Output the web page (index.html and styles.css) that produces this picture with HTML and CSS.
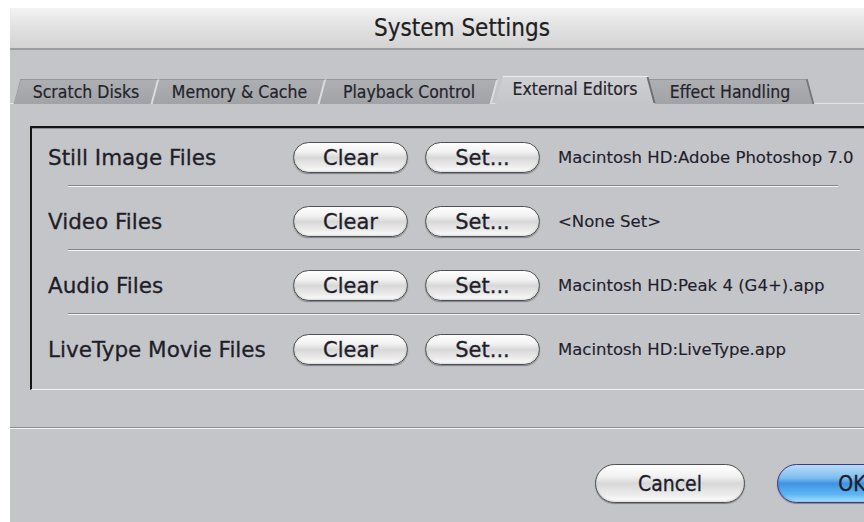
FILE: index.html
```html
<!DOCTYPE html>
<html>
<head>
<meta charset="utf-8">
<title>System Settings</title>
<link rel="stylesheet" href="styles.css">
</head>
<body>
<div class="window">
  <header class="titlebar">
    <h1 class="title">System Settings</h1>
  </header>
  <div class="content">
    <nav class="tabs">
      <div class="tab tab-before tab-first">Scratch Disks</div>
      <div class="tab tab-before">Memory &amp; Cache</div>
      <div class="tab tab-before">Playback Control</div>
      <div class="tab tab-active">External Editors</div>
      <div class="tab tab-after">Effect Handling</div>
    </nav>

    <section class="panel">
      <div class="row">
        <span class="label">Still Image Files</span>
        <button class="pill">Clear</button>
        <button class="pill">Set...</button>
        <span class="path">Macintosh HD:Adobe Photoshop 7.0</span>
      </div>
      <div class="rule rule-short"></div>
      <div class="row">
        <span class="label">Video Files</span>
        <button class="pill">Clear</button>
        <button class="pill">Set...</button>
        <span class="path">&lt;None Set&gt;</span>
      </div>
      <div class="rule"></div>
      <div class="row">
        <span class="label">Audio Files</span>
        <button class="pill">Clear</button>
        <button class="pill">Set...</button>
        <span class="path">Macintosh HD:Peak 4 (G4+).app</span>
      </div>
      <div class="rule"></div>
      <div class="row">
        <span class="label">LiveType Movie Files</span>
        <button class="pill">Clear</button>
        <button class="pill">Set...</button>
        <span class="path">Macintosh HD:LiveType.app</span>
      </div>
    </section>

    <div class="divider"></div>

    <footer class="actions">
      <button class="pill pill-large">Cancel</button>
      <button class="pill pill-large pill-default">OK</button>
    </footer>
  </div>
</div>
</body>
</html>
```

FILE: styles.css
```css
html, body {
  margin: 0;
  padding: 0;
  background: #ffffff;
  overflow: hidden;
}

body {
  width: 864px;
  height: 522px;
  font-family: "DejaVu Sans", "Liberation Sans", sans-serif;
  color: #1c1c24;
}

.window {
  margin: 8px 0 0 10px;
  width: 904px;
  height: 520px;
  background: #c4c5c9;
}

/* ---------- title bar ---------- */
.titlebar {
  height: 40px;
  background: linear-gradient(#f3f3f3, #e2e2e2 45%, #d3d3d3);
  border-bottom: 2px solid #9c9da0;
  display: flex;
  align-items: center;
  justify-content: center;
}

.title {
  margin: 0;
  font-family: "DejaVu Sans Condensed", "DejaVu Sans", sans-serif;
  font-weight: normal;
  font-size: 24px;
  color: #202020;
  -webkit-text-stroke: 0.2px #202020;
}

/* ---------- tabs ---------- */
.content {
  display: flex;
  flex-direction: column;
}

.tabs {
  display: flex;
  align-items: flex-end;
  height: 33px;
  margin-top: 20px;
  padding-left: 7px;
  border-bottom: 1px solid #e4e4e6;
}

.tab {
  position: relative;
  height: 25px;
  display: flex;
  align-items: center;
  justify-content: center;
  font-family: "DejaVu Sans Condensed", "DejaVu Sans", sans-serif;
  font-size: 17.5px;
  color: #23232b;
  -webkit-text-stroke: 0.2px #23232b;
  white-space: nowrap;
  z-index: 1;
  margin-bottom: -1px;
}

.tab::before {
  content: "";
  position: absolute;
  inset: 0;
  z-index: -1;
  background: linear-gradient(#aeafb3, #a2a3a7);
  border-top: 1px solid #96979b;
}

.tab-before::before {
  transform: skewX(-15deg);
  border-right: 2px solid #dcdcde;
}

.tab-first::before {
  border-left: 1px solid #9a9b9f;
}

.tab-before { padding: 0 14px; }
.tab-first { padding: 0 13px 0 12px; width: 114px; }
.tab-before:nth-child(2) { width: 139px; }
.tab-before:nth-child(3) { width: 144px; }

.tab-after {
  width: 142px;
  padding: 0 10px;
  margin-left: -6px;
  z-index: 0;
}

.tab-after::before {
  transform: skewX(15deg);
  border-right: 2px solid #76777b;
}

.tab-active {
  height: 28px;
  width: 160px;
  z-index: 2;
  padding-bottom: 3px;
  box-sizing: border-box;
}

.tab-active::before {
  inset: 0 0 -1px 0;
  border: none;
  background: linear-gradient(#ececee 0 1px, #cfd0d4 1px, #c4c5c9);
  clip-path: polygon(8px 0, calc(100% - 7px) 0, 100% 100%, 0 100%);
}

.tab-active::after {
  content: "";
  position: absolute;
  right: 3px;
  top: 1px;
  width: 2px;
  height: 26px;
  background: #6e6f73;
  transform: skewX(15deg);
  z-index: -1;
}

/* ---------- panel ---------- */
.panel {
  margin: 22px 0 0 20px;
  padding: 14px 0 24px 16px;
  border-top: 2px solid #151515;
  border-left: 2px solid #151515;
  border-bottom: 1px solid #f2f2f4;
  box-shadow: inset 0 1px 0 #8c8d91;
  display: flex;
  flex-direction: column;
}

.row {
  display: flex;
  align-items: center;
  height: 31px;
}

.label {
  width: 245px;
  font-size: 21.5px;
  color: #1e1e2a;
  -webkit-text-stroke: 0.3px #1e1e2a;
  white-space: nowrap;
}

.path {
  margin-left: 18px;
  font-size: 16.5px;
  white-space: nowrap;
  color: #1e1e2c;
  -webkit-text-stroke: 0.15px #1e1e2c;
}

.rule {
  height: 1px;
  margin: 12px 0 19px 20px;
  width: 792px;
  background: #86878b;
  border-bottom: 1px solid #f4f4f6;
}

.rule-short {
  width: 770px;
}

/* ---------- aqua buttons ---------- */
.pill {
  width: 115px;
  height: 31px;
  margin-right: 17px;
  padding: 0;
  border: 1px solid #505155;
  border-radius: 16px;
  background: linear-gradient(#ffffff 0%, #f2f2f2 30%, #d8d8d8 50%, #ececec 80%, #ffffff 100%);
  box-shadow: 0 1px 1px rgba(0, 0, 0, 0.35), inset 0 -1px 2px rgba(0, 0, 0, 0.15);
  font-family: "DejaVu Sans", sans-serif;
  font-size: 21px;
  color: #1e1e2a;
  -webkit-text-stroke: 0.3px #1e1e2a;
  line-height: 28px;
  flex: none;
}

.row .pill:nth-of-type(2) {
  margin-right: 0;
}

/* ---------- bottom area ---------- */
.divider {
  margin-top: 37px;
  height: 1px;
  background: #8e8f93;
  border-bottom: 1px solid #f2f2f4;
}

.actions {
  display: flex;
  margin-top: 35px;
  padding-left: 585px;
}

.pill-large {
  width: 150px;
  height: 39px;
  border-radius: 20px;
  margin-right: 32px;
  font-family: "DejaVu Sans Condensed", "DejaVu Sans", sans-serif;
}

.pill-default {
  border-color: #3a3c8a;
  background: linear-gradient(#b9dcf7 0%, #7fbdf0 35%, #3f93e2 50%, #5eb7f4 80%, #a8e4ff 100%);
}
```
